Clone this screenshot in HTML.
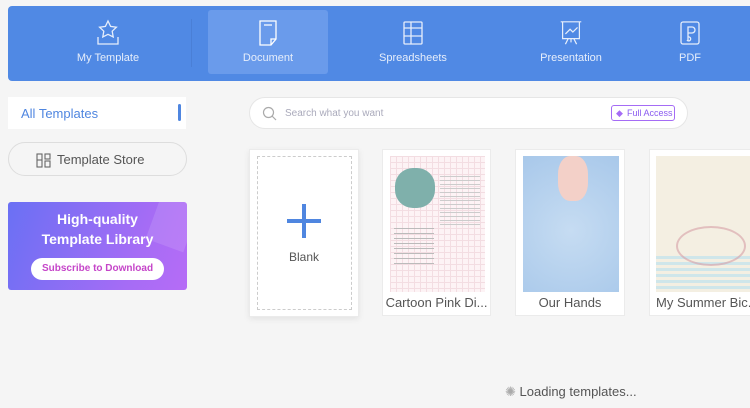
<!DOCTYPE html>
<html><head><meta charset="utf-8"><style>
*{box-sizing:border-box;margin:0;padding:0}
body{width:750px;height:408px;background:#f5f5f5;font-family:"Liberation Sans",sans-serif;position:relative;overflow:hidden}
.hdr{position:absolute;left:8px;top:6px;width:742px;height:75px;background:#5089e4;border-radius:4px 0 0 4px}
.tab{position:absolute;top:4px;height:64px;text-align:center;color:#e6eefb;font-size:11px}
.tab svg{display:block;margin:9px auto 5px;height:28px}
.sel{background:#6a9beb;border-radius:3px}
.abs{position:absolute}
.card{position:absolute;top:149px;background:#fff;border:1px solid #ebebeb}
.cap{position:absolute;bottom:5px;left:0;right:0;font-size:13px;color:#555;text-align:center;white-space:nowrap}
</style></head><body>
<div class="hdr">
 <div class="abs" style="left:183px;top:13px;width:1px;height:48px;background:#4a7fd6"></div>
 <div class="tab" style="left:40px;width:120px"><svg width="26" height="28" viewBox="0 0 26 28" fill="none" stroke="#e6eefb" stroke-width="1.3"><path d="M13 2l2.6 5.4 5.8.8-4.2 4 1 5.8L13 15.3 7.8 18l1-5.8-4.2-4 5.8-.8z"/><path d="M3 18v7h20v-7"/></svg>My Template</div>
 <div class="tab sel" style="left:200px;width:120px"><svg width="22" height="28" viewBox="0 0 22 28" fill="none" stroke="#fff" stroke-width="1.3"><path d="M3 2h16v18l-5 6H3z"/><path d="M7 6h8M14 26v-6h5"/></svg>Document</div>
 <div class="tab" style="left:345px;width:120px"><svg width="22" height="28" viewBox="0 0 22 28" fill="none" stroke="#e6eefb" stroke-width="1.3"><rect x="2" y="3" width="18" height="22" rx="1"/><path d="M2 9h18M2 17h18M9 3v22"/></svg>Spreadsheets</div>
 <div class="tab" style="left:503px;width:120px"><svg width="26" height="28" viewBox="0 0 26 30" fill="none" stroke="#e6eefb" stroke-width="1.3"><path d="M2 3h22M4 3v18h18V3M7 16l5-5 3 3 5-5M10 21l-3 6M16 21l3 6M13 21v4"/></svg>Presentation</div>
 <div class="tab" style="left:632px;width:100px"><svg width="22" height="28" viewBox="0 0 22 28" fill="none" stroke="#e6eefb" stroke-width="1.3"><rect x="2" y="3" width="18" height="22" rx="2"/><path d="M9 22V8h4a3 3 0 010 6H9M9 18a2 2 0 11-1 3"/></svg>PDF</div>
</div>
<div class="abs" style="left:8px;top:97px;width:178px;height:32px;background:#fff;color:#4f86e0;font-size:13px;padding:9px 13px">All Templates</div>
<div class="abs" style="left:178px;top:104px;width:3px;height:17px;background:#4f86e0;border-radius:2px"></div>
<div class="abs" style="left:8px;top:142px;width:179px;height:34px;border:1px solid #ddd;border-radius:17px;font-size:13px;color:#555;padding:9px 0 0 36px"><svg class="abs" style="left:27px;top:10px" width="15" height="15" viewBox="0 0 15 15" fill="none" stroke="#666" stroke-width="1.1"><rect x="1" y="1" width="5" height="13"/><path d="M1 7h5"/><rect x="9" y="1" width="5" height="5"/><rect x="9" y="8" width="5" height="6"/></svg><span style="margin-left:12px">Template Store</span></div>
<div class="abs" style="left:8px;top:202px;width:179px;height:88px;border-radius:3px;background:linear-gradient(110deg,#6a70f4,#a56cf5 70%,#b66cf6);color:#fff;text-align:center;font-weight:bold;font-size:14px;padding-top:7px;line-height:20px;overflow:hidden">
 <div class="abs" style="left:145px;top:-5px;width:40px;height:50px;background:rgba(255,255,255,.12);transform:rotate(20deg)"></div>
 High-quality<br>Template Library
 <div style="margin:9px auto 0;width:133px;height:22px;border-radius:11px;background:#fff;color:#c545c9;font-size:10px;line-height:22px">Subscribe to Download</div>
</div>
<div class="abs" style="left:249px;top:97px;width:439px;height:32px;background:#fff;border:1px solid #e6e6e6;border-radius:16px">
 <svg class="abs" style="left:12px;top:8px" width="15" height="15" viewBox="0 0 15 15" fill="none" stroke="#aaa" stroke-width="1.2"><circle cx="6.5" cy="6.5" r="5"/><path d="M10 10l4 4"/></svg>
 <span class="abs" style="left:35px;top:10px;font-size:10px;color:#aab">Search what you want</span>
 <div class="abs" style="left:361px;top:7px;width:64px;height:16px;border:1px solid #a56cf5;border-radius:3px;font-size:9px;color:#8b5cf0;padding:2px 0 0 15px"><span class="abs" style="left:4px;top:2px;color:#a56cf5">◆</span>Full Access</div>
</div>
<div class="card" style="left:249px;width:110px;height:168px;box-shadow:0 2px 6px rgba(0,0,0,.08)">
 <div class="abs" style="left:7px;top:6px;width:95px;height:154px;border:1px dashed #ccc"></div>
 <div class="abs" style="left:37px;top:69px;width:34px;height:4px;background:#4f86e0"></div>
 <div class="abs" style="left:52px;top:54px;width:4px;height:34px;background:#4f86e0"></div>
 <div class="abs" style="left:0;right:0;top:100px;text-align:center;font-size:12px;color:#555">Blank</div>
</div>
<div class="card" style="left:382px;width:109px;height:167px">
 <div class="abs" style="left:7px;top:6px;width:95px;height:136px;background:#fdf3f5;background-image:linear-gradient(#f3dde2 1px,transparent 1px),linear-gradient(90deg,#f3dde2 1px,transparent 1px);background-size:6px 6px">
  <div class="abs" style="left:5px;top:12px;width:40px;height:40px;background:#7fb0ab;border-radius:45%"></div>
  <div class="abs" style="left:50px;top:20px;width:40px;height:50px;background:repeating-linear-gradient(#ccc 0 1px,transparent 1px 4px)"></div>
  <div class="abs" style="left:4px;top:72px;width:40px;height:40px;background:repeating-linear-gradient(#bbb 0 1px,transparent 1px 5px)"></div>
 </div>
 <div class="cap">Cartoon Pink Di...</div>
</div>
<div class="card" style="left:515px;width:110px;height:167px">
 <div class="abs" style="left:7px;top:6px;width:96px;height:136px;background:radial-gradient(circle at 50% 55%,#c6dcf2,#a8c8ea)">
  <div class="abs" style="left:35px;top:0;width:30px;height:45px;background:#f3d0c8;border-radius:40%"></div>
 </div>
 <div class="cap">Our Hands</div>
</div>
<div class="card" style="left:649px;width:101px;height:167px;border-right:none">
 <div class="abs" style="left:6px;top:6px;width:95px;height:136px;background:#f4efe2">
  <div class="abs" style="left:0;top:100px;width:95px;height:36px;background:repeating-linear-gradient(#cfe6ea 0 3px,#f4efe2 3px 6px)"></div>
  <div class="abs" style="left:20px;top:70px;width:70px;height:40px;border:2px solid #d69fa6;border-radius:50%;opacity:.6"></div>
 </div>
 <div class="cap" style="text-align:left;left:6px">My Summer Bic...</div>
</div>
<div class="abs" style="left:505px;top:384px;font-size:13px;color:#555"><span style="color:#aaa;font-size:13px">✺</span> Loading templates...</div>
</body></html>
